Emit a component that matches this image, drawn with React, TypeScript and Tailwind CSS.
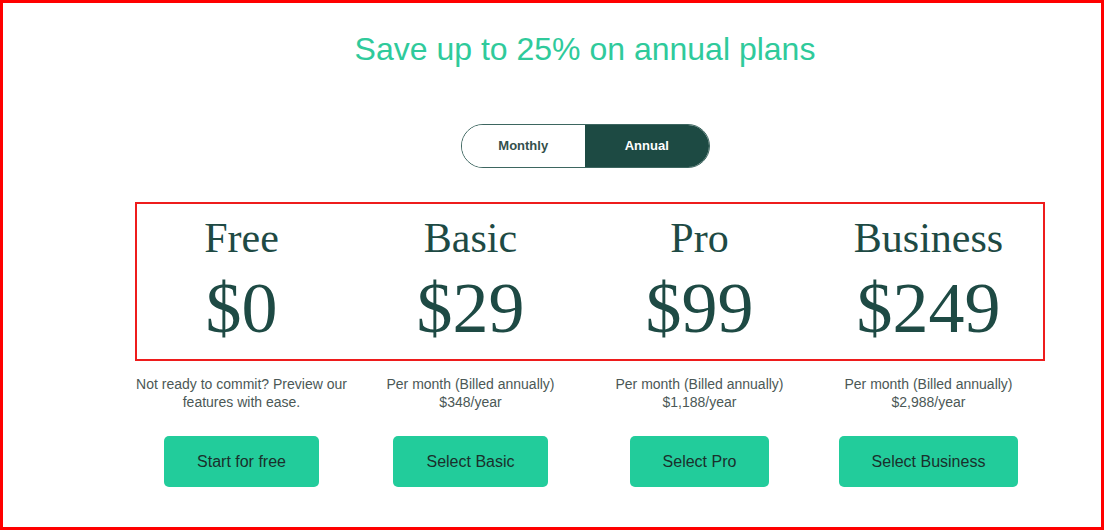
import { useState } from "react";

const plans = [
  {
    name: "Free",
    price: "$0",
    lines: ["Not ready to commit? Preview our", "features with ease."],
    cta: "Start for free",
  },
  {
    name: "Basic",
    price: "$29",
    lines: ["Per month (Billed annually)", "$348/year"],
    cta: "Select Basic",
  },
  {
    name: "Pro",
    price: "$99",
    lines: ["Per month (Billed annually)", "$1,188/year"],
    cta: "Select Pro",
  },
  {
    name: "Business",
    price: "$249",
    lines: ["Per month (Billed annually)", "$2,988/year"],
    cta: "Select Business",
  },
];

export default function App() {
  const [billing, setBilling] = useState<"monthly" | "annual">("annual");

  return (
    <div className="w-[1104px] h-[530px] bg-white border-[3px] border-[#ff0000] overflow-hidden font-['Liberation_Sans',Arial,sans-serif]">
      <div className="w-[916px] ml-[124px] flex flex-col items-center">
        {/* Heading */}
        <h1 className="mt-[27px] text-[32px] leading-[38px] text-[#2fca9b]">
          Save up to 25% on annual plans
        </h1>

        {/* Billing toggle */}
        <div className="mt-[56px] flex h-[44px] w-[249px] rounded-full border border-[#3d6660] overflow-hidden">
          <button
            onClick={() => setBilling("monthly")}
            className={`flex-1 text-[13px] font-bold ${
              billing === "monthly"
                ? "bg-[#1d4a43] text-white"
                : "bg-white text-[#34504c]"
            }`}
          >
            Monthly
          </button>
          <button
            onClick={() => setBilling("annual")}
            className={`flex-1 text-[13px] font-bold ${
              billing === "annual"
                ? "bg-[#1d4a43] text-white"
                : "bg-white text-[#34504c]"
            }`}
          >
            Annual
          </button>
        </div>

        {/* Plan names and prices (highlighted box) */}
        <div className="mt-[34px] self-start ml-[8px] w-[910px] border-2 border-[#ee1c1c] pt-[9px] pb-[12px]">
          <div className="w-[916px] -ml-[10px] grid grid-cols-4">
            {plans.map((plan) => (
              <div key={plan.name} className="flex flex-col items-center">
                <h2 className="font-['Liberation_Serif',serif] text-[42px] leading-[50px] text-[#1e4a44]">
                  {plan.name}
                </h2>
                <div className="mt-[6px] font-['Liberation_Serif',serif] text-[72px] leading-[78px] text-[#1e4a44]">
                  {plan.price}
                </div>
              </div>
            ))}
          </div>
        </div>

        {/* Details and actions */}
        <div className="w-full grid grid-cols-4">
          {plans.map((plan) => (
            <div key={plan.name} className="flex flex-col items-center">
              <div className="mt-[14px] text-center text-[14px] leading-[18px] text-[#4b5856]">
                {plan.lines.map((l) => (
                  <div key={l}>{l}</div>
                ))}
              </div>
              <button className="mt-[25px] h-[51px] px-[33px] rounded-[5px] bg-[#22cc9b] text-[16px] text-[#1a302c]">
                {plan.cta}
              </button>
            </div>
          ))}
        </div>
      </div>
    </div>
  );
}
